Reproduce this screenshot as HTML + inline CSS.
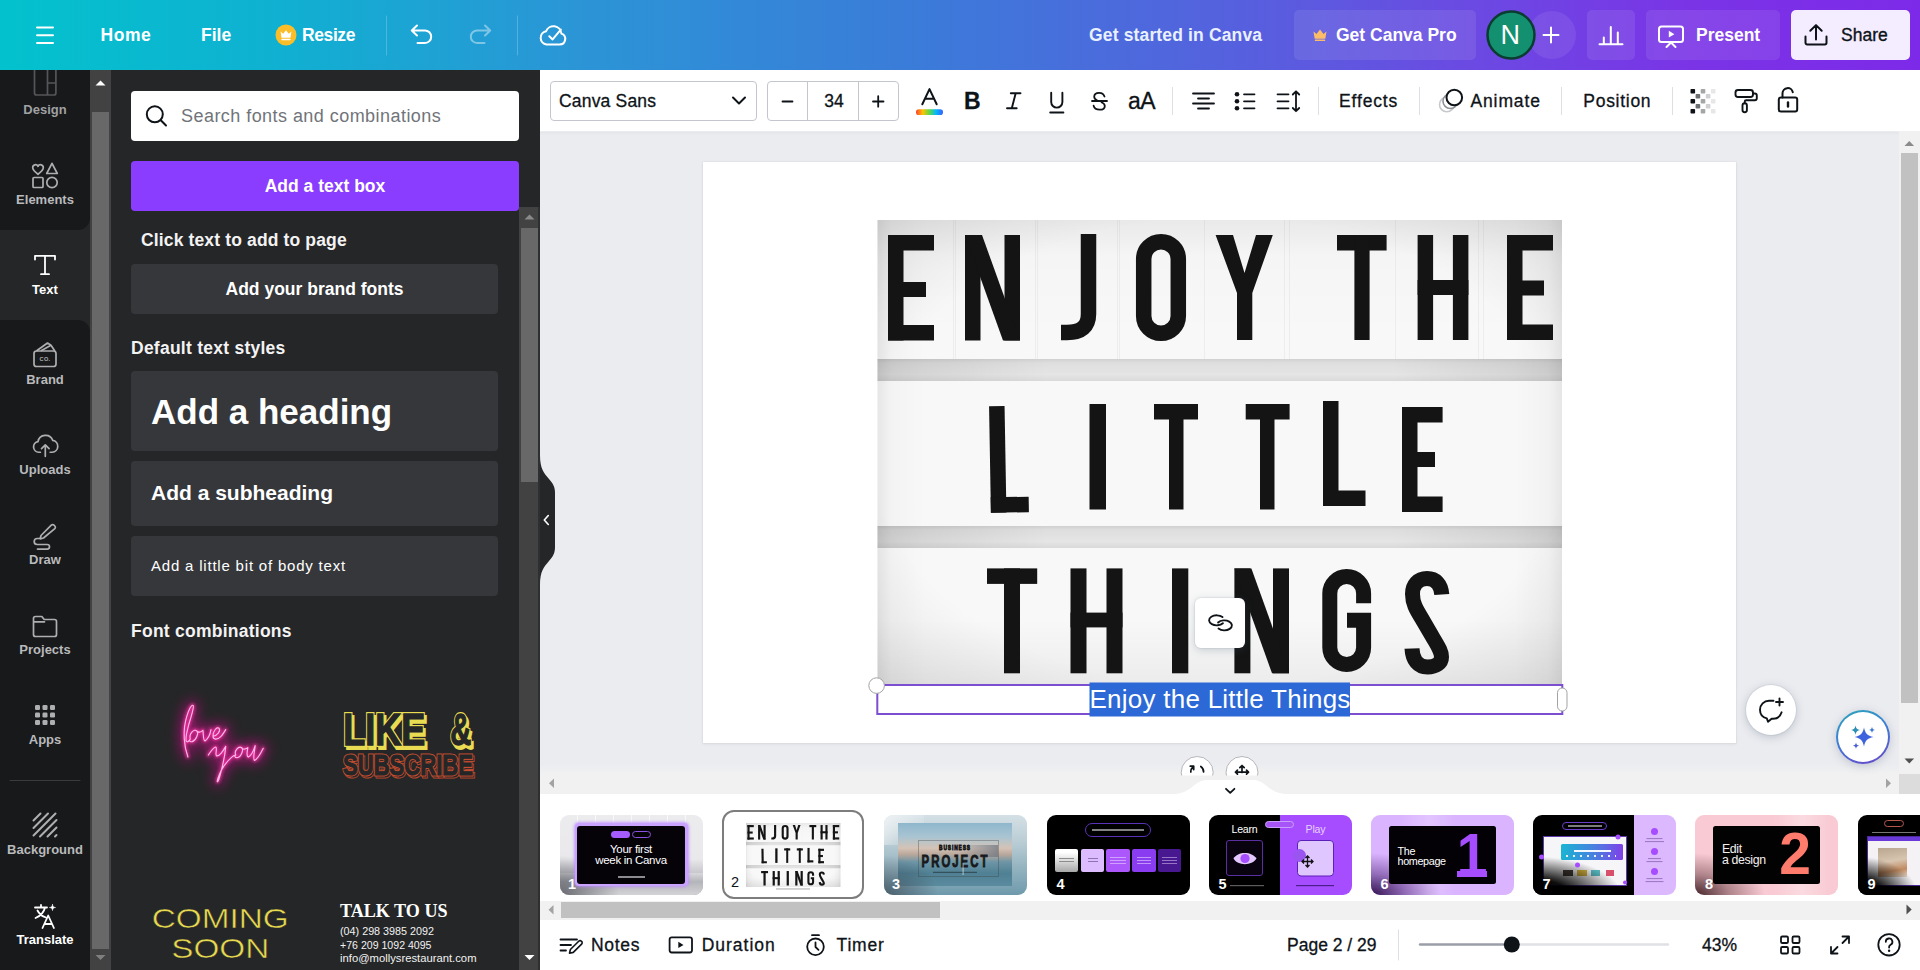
<!DOCTYPE html>
<html>
<head>
<meta charset="utf-8">
<title>Canva</title>
<style>
*{box-sizing:border-box;margin:0;padding:0}
html,body{width:1920px;height:970px;overflow:hidden;background:#ebecf0;font-family:"Liberation Sans",sans-serif;}
.abs{position:absolute}
#top{position:absolute;left:0;top:0;width:1920px;height:70px;background:linear-gradient(90deg,#03c2cd 0%,#0fb1d1 14%,#2b95d6 30%,#3b7bd9 48%,#5561de 64%,#6a4be2 76%,#7a34e6 88%,#7d2ae8 100%);color:#fff;}
#top .t{position:absolute;top:24px;font-weight:bold;font-size:17.5px;line-height:22px;white-space:nowrap;color:#fff}
#nav{position:absolute;left:0;top:70px;width:90px;height:900px;background:#18191b;overflow:hidden}
.ni{position:absolute;left:0;width:90px;text-align:center;color:#b9babc;font-weight:bold;font-size:13px;line-height:16px}
#nsb{position:absolute;left:90px;top:70px;width:21px;height:900px;background:#424242}
#panel{position:absolute;left:111px;top:70px;width:429px;height:900px;background:#252627;overflow:hidden}
#tb{position:absolute;left:540px;top:70px;width:1380px;height:62px;background:#fff;border-bottom:1.5px solid #e4e5e9}
#tb .t{position:absolute;top:20px;font-size:17.5px;line-height:22px;color:#0e1318;white-space:nowrap;-webkit-text-stroke:.3px #0e1318}
.vdiv{position:absolute;width:1px;height:28px;background:#dcdfe4}
#stage{position:absolute;left:540px;top:131px;width:1360px;height:642px;background:#ebecf0;overflow:hidden}
#page{position:absolute;left:703px;top:162px;width:1033px;height:581px;background:#fff;box-shadow:0 0 0 1px rgba(40,50,70,.025),0 1px 3px rgba(40,50,70,.09)}
#strip{position:absolute;left:540px;top:794px;width:1380px;height:107px;background:#fff;overflow:hidden}
#foot{position:absolute;left:540px;top:920px;width:1380px;height:50px;background:#fff}
#foot .t{position:absolute;top:13.5px;font-size:17.5px;line-height:22px;color:#0e1318;white-space:nowrap;-webkit-text-stroke:.3px #0e1318}
.th{position:absolute;top:20.500px;width:143px;height:80px;border-radius:9px;overflow:hidden}
.th .n{position:absolute;left:8px;bottom:3px;color:#fff;font-weight:bold;font-size:14.5px;line-height:16px}
</style>
</head>
<body>
<!-- TOPBAR -->
<div id="top">
<svg class="abs" style="left:0;top:0" width="1920" height="70" viewBox="0 0 1920 70" fill="none" stroke="#fff" stroke-width="2" stroke-linecap="round" stroke-linejoin="round">
<!-- hamburger -->
<path d="M37 27.5H53M37 35.2H53M37 43H53" stroke-width="2"/>
<!-- crown circle -->
<circle cx="286" cy="35" r="10.5" fill="#fbbe28" stroke="none"/>
<path d="M280.6 31.6l2.6 2.2 2.8-3.6 2.8 3.6 2.6-2.2-.9 6.2h-9z" fill="#fff" stroke="none"/>
<rect x="281.3" y="38.8" width="9.4" height="1.5" rx=".7" fill="#fff" stroke="none"/>
<!-- divider -->
<path d="M386.5 16V55" stroke="rgba(255,255,255,.22)" stroke-width="1"/>
<path d="M517.5 16V55" stroke="rgba(255,255,255,.22)" stroke-width="1"/>
<!-- undo -->
<path d="M417 25.5l-5.2 5 5.2 5M412.5 30.5h12.5a6.2 6.2 0 0 1 0 12.4h-7.5" stroke-width="2"/>
<!-- redo -->
<g opacity=".42"><path d="M485 25.5l5.2 5-5.2 5M489.500 30.5h-12.5a6.200 6.200 0 0 0 0 12.400h7.500" stroke-width="2"/></g>
<!-- cloud check -->
<path d="M546.5 44.500h13.200a5.600 5.600 0 0 0 1.700-10.900a8 8 0 0 0-15.400-2.300a6.700 6.700 0 0 0 .5 13.200z" stroke-width="2"/>
<path d="M549.300 36.300l3.300 3.100 8.200-9.800" stroke-width="2"/>
<!-- get canva pro bg -->
<rect x="1294" y="10" width="182" height="50" rx="5" fill="rgba(255,255,255,.09)" stroke="none"/>
<path d="M1313.500 31.500l3 2.600 3.500-4.600 3.500 4.600 3-2.600-1.200 7.300h-10.600z" fill="#fdbc68" stroke="none"/>
<rect x="1314.800" y="39.600" width="10.400" height="1.500" rx=".7" fill="#fdbc68" stroke="none"/>
<!-- plus bubble -->
<circle cx="1552" cy="35" r="24" fill="rgba(255,255,255,.08)" stroke="none"/>
<circle cx="1511" cy="35" r="23.500" fill="#13906f" stroke="#0b3c31" stroke-width="2.500"/>
<path d="M1543.500 35H1558.500M1551 27.500V42.500" stroke-width="2"/>
<!-- chart button -->
<rect x="1587" y="10" width="48" height="50" rx="5" fill="rgba(255,255,255,.09)" stroke="none"/>
<path d="M1599.500 44.300H1622.500M1603.800 44V37.500M1610.800 44V27M1617.800 44V32.500" stroke-width="2"/>
<!-- present button -->
<rect x="1646" y="10" width="134" height="50" rx="5" fill="rgba(255,255,255,.09)" stroke="none"/>
<rect x="1659" y="26.500" width="24" height="15.500" rx="2.500" stroke-width="2"/>
<path d="M1666.500 47l4.500-4.500 4.500 4.500" stroke-width="2"/>
<path d="M1668.800 30.800v6.800l5.600-3.400z" fill="#fff" stroke="none"/>
<!-- share button -->
<rect x="1791" y="10" width="119" height="50" rx="5" fill="#f4edff" stroke="none"/>
<path d="M1805.500 36.500v6.300a1.700 1.700 0 0 0 1.700 1.700h17.600a1.700 1.700 0 0 0 1.700-1.700v-6.300M1816 39.500V25.500M1810.300 30.800l5.700-5.700 5.700 5.700" stroke="#0e1318" stroke-width="2"/>
</svg>
<div class="t" style="left:100.500px;letter-spacing:.55px">Home</div>
<div class="t" style="left:201px">File</div>
<div class="t" style="left:302px;letter-spacing:-.4px">Resize</div>
<div class="t" style="left:1089px;color:#e9f0ff;letter-spacing:.15px">Get started in Canva</div>
<div class="t" style="left:1336px">Get Canva Pro</div>
<div class="t" style="left:1500.500px;top:21px;font-weight:normal;font-size:27px;line-height:28px">N</div>
<div class="t" style="left:1696px">Present</div>
<div class="t" style="left:1841px;color:#0e1318;font-weight:normal;-webkit-text-stroke:.35px #0e1318">Share</div>
</div>
<!-- NAV -->
<div id="nav">
<div class="abs" style="left:0;top:140px;width:90px;height:130px;background:#252627"></div>
<div class="abs" style="left:0;top:-60px;width:90px;height:220px;background:#18191b;border-radius:0 0 12px 0"></div>
<div class="abs" style="left:0;top:250px;width:90px;height:660px;background:#18191b;border-radius:0 12px 0 0"></div>
<svg class="abs" style="left:0;top:0" width="90" height="900" viewBox="0 70 90 900" fill="none" stroke="#aeafb1" stroke-width="1.700" stroke-linecap="round" stroke-linejoin="round">
<!-- design -->
<path d="M34.500 68v25a2 2 0 0 0 2 2h17.400a2 2 0 0 0 2-2V68M47.500 68v27M47.500 83h8.400" stroke="#55565a"/>
<!-- elements -->
<path d="M38 174.300c-2-1.500-5.300-4-5.300-6.700a2.800 2.800 0 0 1 5.300-1.300a2.800 2.800 0 0 1 5.300 1.300c0 2.700-3.300 5.200-5.300 6.700z"/>
<path d="M52 163.300l5.300 10.200h-10.600z"/>
<rect x="33" y="177.500" width="10" height="10" rx="1"/>
<circle cx="52" cy="182.500" r="5.200"/>
<!-- text -->
<path d="M35 259.500v-3.700h20v3.700M45 255.800v18.400M41 274.200h8" stroke="#fff" stroke-width="1.800"/>
<!-- brand -->
<rect x="34" y="351" width="22" height="15.500" rx="2.500"/>
<path d="M37 350.500l10.500-7.500 3.500 2.300M41.500 350.500l9.500-5.200 3.500 5.200"/>
<!-- uploads -->
<g transform="translate(45.300 445.500) scale(.9) translate(-45 -447.500)"><path d="M39.500 455h-1.800a6 6 0 0 1-.8-11.900a8.500 8.500 0 0 1 16.400-1.200a6.600 6.600 0 0 1-.6 13.100h-2.200M45 459.500v-12.500M40.800 451l4.200-4.200 4.200 4.200" stroke-width="1.900"/></g>
<!-- draw -->
<path d="M43.500 538l-3.300.8.800-3.300 10.300-10.300a1.900 1.900 0 0 1 2.700 0l.8.800a1.900 1.900 0 0 1 0 2.700zM39.500 538.500h-2.300a3 3 0 0 0 0 6h10a2.300 2.300 0 0 1 0 4.600h-9.700"/>
<!-- projects -->
<path d="M33.500 618.500a2 2 0 0 1 2-2h6.300l2.400 3h10.300a2 2 0 0 1 2 2v13a2 2 0 0 1-2 2h-19a2 2 0 0 1-2-2zM33.500 621.800h11"/>
<!-- apps -->
<g fill="#aeafb1" stroke="none">
<rect x="35" y="705" width="5" height="5" rx="1.200"/><rect x="42.500" y="705" width="5" height="5" rx="1.200"/><rect x="50" y="705" width="5" height="5" rx="1.200"/>
<rect x="35" y="712.500" width="5" height="5" rx="1.200"/><rect x="42.500" y="712.500" width="5" height="5" rx="1.200"/><rect x="50" y="712.500" width="5" height="5" rx="1.200"/>
<rect x="35" y="720" width="5" height="5" rx="1.200"/><rect x="42.500" y="720" width="5" height="5" rx="1.200"/><rect x="50" y="720" width="5" height="5" rx="1.200"/>
</g>
<!-- sep -->
<path d="M10 780.500H80" stroke="#3a3b3e" stroke-width="1"/>
<!-- background -->
<path d="M33.500 820.500l7-7M33.500 828l14.500-14.500M33.500 835.500l22-22M40 836.500l16.500-16.500M47.500 836.500l9-9M55 836.500l1.500-1.500" stroke-width="2"/>
<!-- translate -->
<g stroke="#fff" stroke-width="1.800">
<path d="M35 907.500h12M41 905v2.500M45 907.500c-1 4.500-4.500 8.500-9.500 10.500M37.500 910.500c1.500 3 4 5.500 8.500 7"/>
<path d="M42.500 928l5.700-12.500 5.700 12.500M44.500 924h7.500"/>
<path d="M52.500 904.500c.3 2 1 2.700 3 3c-2 .3-2.700 1-3 3c-.3-2-1-2.700-3-3c2-.3 2.700-1 3-3z" fill="#fff" stroke-width=".6"/>
</g>
</svg>
<svg class="abs" style="left:37px;top:284px" width="16" height="10" viewBox="0 0 16 10"><text x="8" y="7.300" text-anchor="middle" font-family="Liberation Sans" font-weight="bold" font-size="5.600" fill="#aeafb1" letter-spacing=".3">CO.</text></svg>
<div class="ni" style="top:32px;color:#a0a1a3">Design</div>
<div class="ni" style="top:122px">Elements</div>
<div class="ni" style="top:212px;color:#fff">Text</div>
<div class="ni" style="top:302px">Brand</div>
<div class="ni" style="top:392px">Uploads</div>
<div class="ni" style="top:482px">Draw</div>
<div class="ni" style="top:572px">Projects</div>
<div class="ni" style="top:662px">Apps</div>
<div class="ni" style="top:772px">Background</div>
<div class="ni" style="top:862px;color:#fff">Translate</div>
</div>
<div id="nsb">
<div class="abs" style="left:2px;top:42px;width:17px;height:837px;background:#686868"></div>
<svg class="abs" style="left:0;top:0" width="21" height="900" viewBox="0 0 21 900"><path d="M5.500 15.500l5-5 5 5z" fill="#fff"/><path d="M5.500 885l5 5 5-5z" fill="#7f7f7f"/></svg>
</div>
<!-- PANEL -->
<div id="panel">
<style>
#panel .b{position:absolute;left:20px;width:367px;background:#36373a;border-radius:4px}
#panel .h{position:absolute;left:20px;color:#f3f3f4;font-weight:bold;font-size:17.500px;line-height:22px;white-space:nowrap;letter-spacing:.25px}
</style>
<div class="abs" style="left:20px;top:21px;width:388px;height:50px;background:#fff;border-radius:4px"></div>
<svg class="abs" style="left:32px;top:32px" width="28" height="28" viewBox="0 0 28 28" fill="none" stroke="#0e1318" stroke-width="2" stroke-linecap="round"><circle cx="11.800" cy="12.300" r="8"/><path d="M17.800 18.300l5.200 5.200"/></svg>
<div class="abs" style="left:70px;top:35px;font-size:18px;line-height:22px;color:#70747a;white-space:nowrap;letter-spacing:.45px">Search fonts and combinations</div>
<div class="abs" style="left:20px;top:91px;width:388px;height:50px;background:#8b3dff;border-radius:4px;color:#fff;font-weight:bold;font-size:17.500px;line-height:50px;text-align:center">Add a text box</div>
<div class="h" style="left:30px;top:158.500px;letter-spacing:.14px">Click text to add to page</div>
<div class="b" style="top:194px;height:50px;color:#fff;font-weight:bold;font-size:17.500px;line-height:50px;text-align:center">Add your brand fonts</div>
<div class="h" style="top:267px">Default text styles</div>
<div class="b" style="top:301px;height:80px"></div>
<div class="abs" style="left:40px;top:321px;color:#fff;font-weight:bold;font-size:35px;line-height:42px;white-space:nowrap">Add a heading</div>
<div class="b" style="top:391px;height:65px"></div>
<div class="abs" style="left:40px;top:409px;color:#fff;font-weight:bold;font-size:21px;line-height:28px;white-space:nowrap">Add a subheading</div>
<div class="b" style="top:466px;height:60px"></div>
<div class="abs" style="left:40px;top:485.500px;color:#fff;font-size:15px;line-height:20px;white-space:nowrap;letter-spacing:.8px">Add a little bit of body text</div>
<div class="h" style="top:550px">Font combinations</div>

<svg class="abs" style="left:19px;top:600px" width="390" height="300" viewBox="130 670 390 300">
<defs><filter id="gl" x="-60%" y="-60%" width="220%" height="220%"><feGaussianBlur stdDeviation="48"/></filter><filter id="gl2" x="-30%" y="-30%" width="160%" height="160%"><feGaussianBlur stdDeviation="13"/></filter></defs>
<g transform="translate(150 680) scale(.13403)" fill="none" stroke-linecap="round" stroke-linejoin="round">
<g stroke="#e8109a" stroke-width="70" opacity=".55" filter="url(#gl)"><path d="M283,575 C255,500 240,380 275,270 C290,220 310,180 322,190 C332,200 310,260 290,330 C275,390 262,430 270,455 C280,470 290,455 300,440 C290,400 330,360 350,380 C365,395 345,450 315,460 C295,465 290,450 300,440 M350,385 C370,392 385,388 395,375 C400,410 395,450 410,455 C430,440 450,400 455,370 M470,420 C500,415 530,380 515,360 C500,345 470,380 470,420 C470,445 500,450 530,420 C545,405 555,385 565,370"/><path d="M435,560 C455,530 475,500 490,500 C505,505 485,550 495,565 C515,575 545,530 565,495 C560,560 540,650 520,720 C510,760 495,775 505,740 C520,690 560,620 610,575 C620,565 630,562 640,560 C625,530 660,490 685,505 C700,520 680,575 650,580 C630,580 630,565 640,560 M685,510 C700,520 715,515 730,505 C725,540 715,570 735,575 C755,565 775,520 785,490 C780,530 765,590 780,600 C800,595 830,540 845,510"/></g>
</g>
<g transform="translate(150 680) scale(.13403)" fill="none" stroke-linecap="round" stroke-linejoin="round">
<g stroke="#ff2fa8" stroke-width="24" opacity=".8" filter="url(#gl2)"><path d="M283,575 C255,500 240,380 275,270 C290,220 310,180 322,190 C332,200 310,260 290,330 C275,390 262,430 270,455 C280,470 290,455 300,440 C290,400 330,360 350,380 C365,395 345,450 315,460 C295,465 290,450 300,440 M350,385 C370,392 385,388 395,375 C400,410 395,450 410,455 C430,440 450,400 455,370 M470,420 C500,415 530,380 515,360 C500,345 470,380 470,420 C470,445 500,450 530,420 C545,405 555,385 565,370"/><path d="M435,560 C455,530 475,500 490,500 C505,505 485,550 495,565 C515,575 545,530 565,495 C560,560 540,650 520,720 C510,760 495,775 505,740 C520,690 560,620 610,575 C620,565 630,562 640,560 C625,530 660,490 685,505 C700,520 680,575 650,580 C630,580 630,565 640,560 M685,510 C700,520 715,515 730,505 C725,540 715,570 735,575 C755,565 775,520 785,490 C780,530 765,590 780,600 C800,595 830,540 845,510"/></g>
<g stroke="#ffb9e8" stroke-width="8.500"><path d="M283,575 C255,500 240,380 275,270 C290,220 310,180 322,190 C332,200 310,260 290,330 C275,390 262,430 270,455 C280,470 290,455 300,440 C290,400 330,360 350,380 C365,395 345,450 315,460 C295,465 290,450 300,440 M350,385 C370,392 385,388 395,375 C400,410 395,450 410,455 C430,440 450,400 455,370 M470,420 C500,415 530,380 515,360 C500,345 470,380 470,420 C470,445 500,450 530,420 C545,405 555,385 565,370"/><path d="M435,560 C455,530 475,500 490,500 C505,505 485,550 495,565 C515,575 545,530 565,495 C560,560 540,650 520,720 C510,760 495,775 505,740 C520,690 560,620 610,575 C620,565 630,562 640,560 C625,530 660,490 685,505 C700,520 680,575 650,580 C630,580 630,565 640,560 M685,510 C700,520 715,515 730,505 C725,540 715,570 735,575 C755,565 775,520 785,490 C780,530 765,590 780,600 C800,595 830,540 845,510"/></g>
</g>
<g font-family="Liberation Sans" font-weight="bold">
<g textLength="84">
<text x="345.300" y="747.800" font-size="44" textLength="82" lengthAdjust="spacingAndGlyphs" fill="#e9dc52" stroke="#e9dc52" stroke-width="3.800" stroke-linejoin="miter">LIKE</text>
<text x="452.300" y="747.800" font-size="44" textLength="21" lengthAdjust="spacingAndGlyphs" fill="#e9dc52" stroke="#e9dc52" stroke-width="3.800">&amp;</text>
<text x="343.300" y="744.800" font-size="44" textLength="82" lengthAdjust="spacingAndGlyphs" fill="#e9dc52" stroke="#e9dc52" stroke-width="3.800" stroke-linejoin="miter">LIKE</text>
<text x="450.300" y="744.800" font-size="44" textLength="21" lengthAdjust="spacingAndGlyphs" fill="#e9dc52" stroke="#e9dc52" stroke-width="3.800">&amp;</text>
<text x="343.300" y="744.800" font-size="44" textLength="82" lengthAdjust="spacingAndGlyphs" fill="#252627" stroke="#252627" stroke-width="1.300" stroke-linejoin="miter">LIKE</text>
<text x="450.300" y="744.800" font-size="44" textLength="21" lengthAdjust="spacingAndGlyphs" fill="#252627" stroke="#252627" stroke-width="1.300">&amp;</text>
<text x="344.500" y="776.800" font-size="29" textLength="130" lengthAdjust="spacingAndGlyphs" fill="#b8472d" stroke="#b8472d" stroke-width="3.200">SUBSCRIBE</text>
<text x="344.500" y="776.800" font-size="29" textLength="130" lengthAdjust="spacingAndGlyphs" fill="#252627" stroke="#252627" stroke-width="1.100">SUBSCRIBE</text>
<text x="343" y="775.300" font-size="29" textLength="130" lengthAdjust="spacingAndGlyphs" fill="#c44e30" stroke="#c44e30" stroke-width="3.200">SUBSCRIBE</text>
<text x="343" y="775.300" font-size="29" textLength="130" lengthAdjust="spacingAndGlyphs" fill="#252627" stroke="#252627" stroke-width="1.100">SUBSCRIBE</text>
</g>
</g>
<g font-family="Liberation Sans" fill="#e8da50" font-size="28.500" stroke="#252627" stroke-width=".5">
<text x="220.300" y="928.300" text-anchor="middle" textLength="137" lengthAdjust="spacingAndGlyphs">COMING</text>
<text x="220.300" y="957.500" text-anchor="middle" textLength="98" lengthAdjust="spacingAndGlyphs">SOON</text>
</g>
<text x="340" y="917.400" font-family="Liberation Serif" font-weight="bold" font-size="18.500" fill="#fff" textLength="107.500" lengthAdjust="spacingAndGlyphs">TALK TO US</text>
<g font-family="Liberation Sans" fill="#f2f2f2" font-size="10.300">
<text x="340" y="935.300" textLength="94" lengthAdjust="spacingAndGlyphs">(04) 298 3985 2092</text>
<text x="340" y="948.600" textLength="91.500" lengthAdjust="spacingAndGlyphs">+76 209 1092 4095</text>
<text x="340" y="962.300" textLength="136.500" lengthAdjust="spacingAndGlyphs">info@mollysrestaurant.com</text>
</g>
</svg>
<!-- inner scrollbar -->
<div class="abs" style="left:408px;top:137px;width:21px;height:763px;background:#424242"></div>
<div class="abs" style="left:409.500px;top:158px;width:17px;height:254px;background:#686868"></div><div class="abs" style="left:427px;top:137px;width:2px;height:763px;background:#2e2f30"></div>
<svg class="abs" style="left:408px;top:137px" width="21" height="763" viewBox="0 0 21 763"><path d="M5.500 12.500l5-5 5 5z" fill="#8a8a8a"/><path d="M5.500 748l5 5 5-5z" fill="#fff"/></svg>
</div>
<!-- TOOLBAR -->
<div id="tb">
<div class="abs" style="left:10px;top:11px;width:207px;height:40px;border:1px solid #c3c6cc;border-radius:4px"></div>
<div class="abs" style="left:227px;top:11px;width:132px;height:40px;border:1px solid #c3c6cc;border-radius:4px"></div>
<div class="abs" style="left:267px;top:12px;width:1px;height:38px;background:#c3c6cc"></div>
<div class="abs" style="left:318px;top:12px;width:1px;height:38px;background:#c3c6cc"></div>
<div class="t" style="left:19px;letter-spacing:.18px">Canva Sans</div>
<div class="t" style="left:282px;width:24px;text-align:center">34</div>
<div class="t" style="left:799px;letter-spacing:.85px">Effects</div>
<div class="t" style="left:930.400px;letter-spacing:.9px">Animate</div>
<div class="t" style="left:1043.300px;letter-spacing:.72px">Position</div>
<div class="t" style="left:424px;top:19px;font-weight:bold;font-size:23px;line-height:24px">B</div>

<div class="t" style="left:588px;top:19px;font-size:23px;line-height:24px;letter-spacing:-.5px">aA</div>
<svg class="abs" style="left:0;top:0" width="1380" height="61" viewBox="540 70 1380 61" fill="none" stroke="#0e1318" stroke-width="2" stroke-linecap="round" stroke-linejoin="round">
<path d="M733 97.500l6 6 6-6"/>
<path d="M782.500 101.500h10M873 101.500h10.500M878.200 96.200v10.500" stroke-width="1.800"/>
<!-- A color -->
<path d="M922.300 104.300l7.200-15.200 7.200 15.200M925.200 98.800h8.600" stroke-width="2"/>
<defs><linearGradient id="rb" x1="0" x2="1"><stop offset="0" stop-color="#ff3d2e"/><stop offset=".25" stop-color="#ffc400"/><stop offset=".5" stop-color="#5cd94a"/><stop offset=".75" stop-color="#00b7ff"/><stop offset="1" stop-color="#3f5bff"/></linearGradient></defs>
<rect x="916" y="109.300" width="27" height="5.700" rx="2.850" fill="url(#rb)" stroke="none"/>
<path d="M1010.800 93.300h9.700M1007 108.300h9.700M1015.700 93.300l-3.900 15" stroke-width="1.900"/>
<!-- U -->
<path d="M1051.200 92.800v9.200a5.600 5.600 0 0 0 11.200 0v-9.200M1050.200 112.500h13.200" stroke-width="1.900"/>
<!-- S strike -->
<path d="M1104.500 96.500c-.8-2.400-2.700-3.700-5.300-3.700c-3 0-5 1.600-5 4c0 1.500 1 2.700 2.800 3.500M1101.500 102.200c1.800.8 3.300 1.900 3.300 3.700c0 2.300-2.200 3.800-5.200 3.800c-3 0-5.300-1.400-6-4M1092 101h15" stroke-width="1.800"/>
<!-- align -->
<path d="M1193 93.500h21M1198 98.500h11M1193 103.500h21M1198 108.500h11" stroke-width="1.800"/>
<!-- list -->
<g fill="#0e1318" stroke="none"><circle cx="1237" cy="94.300" r="2.300"/><circle cx="1237" cy="101.300" r="2.300"/><circle cx="1237" cy="108.300" r="2.300"/></g>
<path d="M1244 94.300h10.500M1244 101.300h10.500M1244 108.300h10.500" stroke-width="1.800"/>
<!-- spacing -->
<path d="M1277.500 94.300h11M1277.500 101.300h11M1277.500 108.300h11M1296 91.500v19.500M1292.800 94.500l3.200-3.200 3.200 3.200M1292.800 108l3.200 3.200 3.200-3.200" stroke-width="1.800"/>
<!-- animate -->
<circle cx="1446.800" cy="104.500" r="7.300" stroke="#c6c8cc" stroke-width="1.600"/>
<circle cx="1450.300" cy="101.200" r="7.300" fill="#fff" stroke="#8d9096" stroke-width="1.600"/>
<circle cx="1454.300" cy="97.500" r="7.800" fill="#fff" stroke-width="2"/>
<!-- checker -->
<g stroke="none"><rect x="1690.5" y="89.0" width="4.600" height="4.600" rx=".8" fill="#0e1318" opacity="1.00"/><rect x="1700.7" y="89.0" width="4.600" height="4.600" rx=".8" fill="#0e1318" opacity="0.38"/><rect x="1710.9" y="89.0" width="4.600" height="4.600" rx=".8" fill="#0e1318" opacity="0.10"/><rect x="1695.6" y="94.0" width="4.600" height="4.600" rx=".8" fill="#0e1318" opacity="0.62"/><rect x="1705.8" y="94.0" width="4.600" height="4.600" rx=".8" fill="#0e1318" opacity="0.20"/><rect x="1690.5" y="99.0" width="4.600" height="4.600" rx=".8" fill="#0e1318" opacity="1.00"/><rect x="1700.7" y="99.0" width="4.600" height="4.600" rx=".8" fill="#0e1318" opacity="0.38"/><rect x="1710.9" y="99.0" width="4.600" height="4.600" rx=".8" fill="#0e1318" opacity="0.10"/><rect x="1695.6" y="104.0" width="4.600" height="4.600" rx=".8" fill="#0e1318" opacity="0.62"/><rect x="1705.8" y="104.0" width="4.600" height="4.600" rx=".8" fill="#0e1318" opacity="0.20"/><rect x="1690.5" y="109.0" width="4.600" height="4.600" rx=".8" fill="#0e1318" opacity="1.00"/><rect x="1700.7" y="109.0" width="4.600" height="4.600" rx=".8" fill="#0e1318" opacity="0.38"/><rect x="1710.9" y="109.0" width="4.600" height="4.600" rx=".8" fill="#0e1318" opacity="0.10"/></g>
<!-- roller -->
<rect x="1735.500" y="90" width="17.500" height="7" rx="2.500" stroke-width="1.900"/>
<path d="M1753 93.500h1.800a2 2 0 0 1 2 2v2.800a2 2 0 0 1-2 2h-8.600a1.500 1.500 0 0 0-1.500 1.500v1.500" stroke-width="1.900"/>
<rect x="1742.500" y="103.300" width="4.400" height="9" rx="2.200" stroke-width="1.900"/>
<!-- lock -->
<rect x="1778.800" y="97.500" width="18.400" height="14" rx="2" stroke-width="2"/>
<path d="M1782.500 97.500v-4.200a5.200 5.200 0 0 1 10.300-1" stroke-width="2"/>
<path d="M1788 102.500v4" stroke-width="2.400"/>
</svg>
<div class="vdiv" style="left:632px;top:17px"></div>
<div class="vdiv" style="left:778px;top:17px"></div>
<div class="vdiv" style="left:879px;top:17px"></div>
<div class="vdiv" style="left:1021px;top:17px"></div>
<div class="vdiv" style="left:1132px;top:17px"></div>
</div>
<!-- STAGE -->
<div id="stage"></div>
<div id="page"></div>
<svg class="abs" style="left:0;top:0" width="1920" height="780" viewBox="0 0 1920 780">
<defs>
<linearGradient id="vg" x1="0" x2="1"><stop offset="0" stop-color="#000" stop-opacity=".07"/><stop offset=".02" stop-color="#000" stop-opacity=".02"/><stop offset=".07" stop-color="#000" stop-opacity="0"/><stop offset=".93" stop-color="#000" stop-opacity="0"/><stop offset=".98" stop-color="#000" stop-opacity=".025"/><stop offset="1" stop-color="#000" stop-opacity=".07"/></linearGradient>
<linearGradient id="vg2" x1="0" y1="0" x2="0" y2="1"><stop offset="0" stop-color="#000" stop-opacity=".06"/><stop offset=".08" stop-color="#000" stop-opacity=".012"/><stop offset=".25" stop-color="#000" stop-opacity="0"/><stop offset=".86" stop-color="#000" stop-opacity="0"/><stop offset="1" stop-color="#000" stop-opacity=".05"/></linearGradient>
<radialGradient id="vg3" cx=".5" cy=".5" r=".72"><stop offset="0" stop-color="#000" stop-opacity="0"/><stop offset=".7" stop-color="#000" stop-opacity="0"/><stop offset="1" stop-color="#000" stop-opacity=".085"/></radialGradient>
<linearGradient id="bdh" x1="0" x2="1"><stop offset="0" stop-color="#000" stop-opacity=".09"/><stop offset=".25" stop-color="#000" stop-opacity="0"/><stop offset=".75" stop-color="#000" stop-opacity="0"/><stop offset="1" stop-color="#000" stop-opacity=".09"/></linearGradient>
<linearGradient id="bd" x1="0" y1="0" x2="0" y2="1"><stop offset="0" stop-color="#d0d0d0"/><stop offset=".18" stop-color="#dedede"/><stop offset=".7" stop-color="#e5e5e5"/><stop offset="1" stop-color="#dadada"/></linearGradient>
</defs>
<g id="board"><rect x="877.500" y="220" width="684.500" height="464" fill="#f8f8f8"/>
<rect x="953" y="220" width="1" height="140" fill="rgba(0,0,0,.045)"/><rect x="955" y="220" width="1" height="140" fill="rgba(0,0,0,.045)"/><rect x="1035" y="220" width="1" height="140" fill="rgba(0,0,0,.045)"/><rect x="1037" y="220" width="1" height="140" fill="rgba(0,0,0,.045)"/><rect x="1117" y="220" width="1" height="140" fill="rgba(0,0,0,.045)"/><rect x="1119" y="220" width="1" height="140" fill="rgba(0,0,0,.045)"/><rect x="1204" y="220" width="1" height="140" fill="rgba(0,0,0,.045)"/><rect x="1284" y="220" width="1" height="140" fill="rgba(0,0,0,.045)"/><rect x="1289" y="220" width="1" height="140" fill="rgba(0,0,0,.045)"/><rect x="1395" y="220" width="1" height="140" fill="rgba(0,0,0,.045)"/><rect x="1478" y="220" width="1" height="140" fill="rgba(0,0,0,.045)"/><rect x="1483" y="220" width="1" height="140" fill="rgba(0,0,0,.045)"/>
<rect x="877.500" y="359" width="684.500" height="22" fill="url(#bd)"/>
<rect x="877.500" y="526" width="684.500" height="22" fill="url(#bd)"/>
<rect x="877.500" y="359" width="684.500" height="22" fill="url(#bdh)"/><rect x="877.500" y="526" width="684.500" height="22" fill="url(#bdh)"/><rect x="877.500" y="220" width="684.500" height="464" fill="url(#vg3)"/><rect x="877.500" y="220" width="684.500" height="464" fill="url(#vg)"/>
<rect x="877.500" y="220" width="684.500" height="464" fill="url(#vg2)"/>
<g fill="#141414"><rect x="888.0" y="235.0" width="15.5" height="105.5"/><rect x="888.0" y="235.0" width="46.0" height="15.5"/><rect x="888.0" y="325.0" width="46.0" height="15.5"/><rect x="888.0" y="282.0" width="38.0" height="15.0"/><rect x="965.0" y="235.0" width="15.5" height="105.5"/><rect x="1004.5" y="235.0" width="15.5" height="105.5"/><polygon points="965.0,235.0 982.0,235.0 1020.0,340.5 1003.0,340.5"/><path d="M1088.500 234V314Q1088.500 332.500 1067 332.500H1061" fill="none" stroke="#141414" stroke-width="15.500"/><rect x="1143.700" y="241.700" width="34.600" height="91.600" rx="17.300" fill="none" stroke="#141414" stroke-width="15.500"/><polygon points="1215.600,235 1233,235 1244.500,273 1256,235 1272.800,235 1252.300,293 1252.300,340 1237,340 1237,293"/><rect x="1337.0" y="235.0" width="49.6" height="15.5"/><rect x="1354.4" y="235.0" width="15.2" height="105.0"/><rect x="1417.6" y="235.0" width="15.5" height="105.0"/><rect x="1452.9" y="235.0" width="15.5" height="105.0"/><rect x="1417.6" y="280.0" width="50.8" height="15.0"/><rect x="1507.0" y="235.0" width="15.5" height="105.0"/><rect x="1507.0" y="235.0" width="46.0" height="15.5"/><rect x="1507.0" y="324.5" width="46.0" height="15.5"/><rect x="1507.0" y="280.5" width="37.0" height="15.0"/><g transform="rotate(-1 1009 460)"><rect x="990.0" y="406.0" width="15.5" height="106.5"/><rect x="990.0" y="497.0" width="38.0" height="15.5"/></g><rect x="1089.5" y="404.0" width="16.5" height="105.5"/><rect x="1154.0" y="404.0" width="44.0" height="15.5"/><rect x="1169.0" y="404.0" width="14.5" height="105.5"/><rect x="1245.7" y="404.0" width="43.9" height="15.5"/><rect x="1260.0" y="404.0" width="14.5" height="105.5"/><rect x="1323.0" y="401.0" width="15.5" height="105.0"/><rect x="1323.0" y="490.5" width="42.5" height="15.5"/><rect x="1402.0" y="407.0" width="15.5" height="105.0"/><rect x="1402.0" y="407.0" width="40.6" height="15.5"/><rect x="1402.0" y="496.5" width="40.6" height="15.5"/><rect x="1402.0" y="452.0" width="33.0" height="15.0"/><rect x="987.0" y="568.4" width="50.2" height="15.5"/><rect x="1004.0" y="568.4" width="16.0" height="104.9"/><rect x="1070.5" y="568.4" width="16.0" height="104.9"/><rect x="1106.5" y="568.4" width="16.0" height="104.9"/><rect x="1070.5" y="612.6" width="52.0" height="14.8"/><rect x="1172" y="568.4" width="16.300" height="104.900"/><rect x="1234.4" y="568.4" width="16.0" height="104.9"/><rect x="1273.0" y="568.4" width="16.0" height="104.9"/><polygon points="1234.4,568.4 1251.4,568.4 1289.0,673.3 1272.0,673.3"/><path d="M1363.600 603.300V593.500a16.900 16.900 0 0 0-33.800 0V647.500a16.900 16.900 0 0 0 33.800 0V620.200H1347" fill="none" stroke="#141414" stroke-width="15" stroke-linejoin="miter"/><path d="M1441.800 594.500C1441 584 1435.500 578.500 1427 578.500C1418 578.500 1412.500 585 1412.500 594C1412.500 603 1416 609 1421.500 618L1432 636C1437.500 645.500 1441.500 651 1441.500 657C1441.500 663 1436 667 1427.500 667C1418 667 1412.500 660 1412 648.500" fill="none" stroke="#141414" stroke-width="15"/></g>
</g>
<!-- selection -->
<rect x="877.300" y="685" width="685" height="29" fill="none" stroke="#7b4fd0" stroke-width="2"/>
<rect x="1089.500" y="682.500" width="260.500" height="34" fill="#2c68d6"/>
<circle cx="876.600" cy="685.600" r="7.800" fill="#fff" stroke="#a3a3a3" stroke-width="1"/>
<rect x="1557.500" y="688" width="9.500" height="23" rx="4.700" fill="#fff" stroke="#a3a3a3" stroke-width="1"/>
</svg>
<div class="abs" style="left:1089.500px;top:684px;width:260.500px;text-align:center;color:#fff;font-size:26px;line-height:30px;white-space:nowrap;letter-spacing:.25px">Enjoy the Little Things</div>
<!-- link popup -->
<div class="abs" style="left:1194.500px;top:597.500px;width:50px;height:50px;background:#fff;border-radius:6px;box-shadow:0 0 0 1px rgba(64,87,109,.07),0 2px 8px rgba(64,87,109,.25)"></div>
<svg class="abs" style="left:1194.500px;top:597.500px" width="50" height="50" viewBox="0 0 50 50" fill="none" stroke="#0e1318" stroke-width="1.900" stroke-linecap="round"><path d="M27.500 19.100A7.600 5 0 1 0 27.900 25.200"/><path d="M23.500 30.600A7.600 5 0 1 0 23.100 24.500"/></svg>

<!-- stage chrome -->
<div class="abs" style="left:540px;top:132px;width:1360px;height:3px;background:linear-gradient(#e4e5e9,#ebecf0)"></div><div class="abs" style="left:540px;top:764px;width:1360px;height:10px;background:linear-gradient(#ebecf0,#f1f1f1)"></div>
<!-- v scrollbar -->
<div class="abs" style="left:1899px;top:131px;width:21px;height:643px;background:#f1f1f1"></div>
<div class="abs" style="left:1901px;top:153px;width:17px;height:550px;background:#c1c1c1"></div>
<svg class="abs" style="left:1899px;top:131px" width="21" height="643" viewBox="0 0 21 643"><path d="M5.500 15l4.800-5 4.800 5z" fill="#8a8a8a"/><path d="M5.500 627.500l4.800 5 4.800-5z" fill="#505050"/></svg>
<!-- h scrollbar -->
<div class="abs" style="left:540px;top:774px;width:1359px;height:20px;background:#f1f1f1"></div>
<div class="abs" style="left:1899px;top:774px;width:21px;height:20px;background:#dcdcdc"></div>
<svg class="abs" style="left:540px;top:755px" width="1360" height="40" viewBox="540 755 1360 40">
<path d="M554 778.500l-5 4.800 5 4.800z" fill="#a3a3a3"/><path d="M1886 778.500l5 4.800-5 4.800z" fill="#a3a3a3"/>
<defs><clipPath id="cpb"><rect x="540" y="755" width="1360" height="20.500"/></clipPath></defs>
<g clip-path="url(#cpb)" fill="#fff" stroke="#b4b6bb" stroke-width="1">
<circle cx="1197.200" cy="772.500" r="16"/><circle cx="1242" cy="772.500" r="16"/>
<g fill="none" stroke="#0e1318" stroke-width="1.700" stroke-linecap="round" stroke-linejoin="round">
<path d="M1190.800 772a6.500 6.500 0 0 1 2.600-5.300M1190.300 766.200h3.400v3.400M1200.800 766.500a6.500 6.500 0 0 1 2.800 5.500"/>
<path d="M1242 765.500v7M1239.800 767.700l2.200-2.200 2.200 2.200M1235.500 772.200h13M1237.500 770.200l-2 2 2 2M1246.500 770.200l2 2-2 2"/>
</g></g>
<path d="M1168 794.500c14 0 20-4 26-9c5-4 8-5.500 14-5.500h44c6 0 9 1.500 14 5.500c6 5 12 9 26 9z" fill="#fff"/>
<path d="M1226 788.800l4.200 4 4.200-4" fill="none" stroke="#0e1318" stroke-width="1.800" stroke-linecap="round" stroke-linejoin="round"/>
</svg>
<!-- floating buttons -->
<div class="abs" style="left:1746px;top:685px;width:50px;height:50px;border-radius:50%;background:#fff;box-shadow:0 0 0 1px rgba(64,87,109,.07),0 2px 10px rgba(64,87,109,.28)"></div>
<svg class="abs" style="left:1746px;top:685px" width="50" height="50" viewBox="0 0 50 50" fill="none" stroke="#0e1318" stroke-width="1.900" stroke-linecap="round" stroke-linejoin="round"><path d="M27.500 15.800h-4.500a9 9 0 0 0-9 9c0 4.200 2.800 7.600 6.800 8.600l1.200 3.400 3.600-3h1.400a9 9 0 0 0 8.600-6.500"/><path d="M30 17h7M33.500 13.500v7"/></svg>
<div class="abs" style="left:1836px;top:710px;width:54px;height:54px;border-radius:50%;background:linear-gradient(160deg,#2aa6b8 0%,#3d7ed6 45%,#6a44c8 100%);box-shadow:0 2px 10px rgba(64,87,109,.25)"></div>
<div class="abs" style="left:1838px;top:712px;width:50px;height:50px;border-radius:50%;background:#fff"></div>
<svg class="abs" style="left:1836px;top:710px" width="54" height="54" viewBox="0 0 54 54"><defs><linearGradient id="mg" x1="0" y1="0" x2="1" y2="1"><stop offset="0" stop-color="#2b9fc0"/><stop offset=".5" stop-color="#3f63dd"/><stop offset="1" stop-color="#5a4fd0"/></linearGradient></defs>
<path d="M28 17.500c1.200 6 3.200 8.300 9.500 9.500c-6.300 1.200-8.300 3.500-9.500 9.500c-1.200-6-3.200-8.300-9.500-9.500c6.300-1.200 8.300-3.500 9.500-9.500z" fill="#3f63dd"/>
<path d="M19.500 15.500c.6 3 1.600 4 4.500 4.600c-2.900.6-3.900 1.600-4.500 4.600c-.6-3-1.600-4-4.500-4.600c2.900-.6 3.900-1.600 4.500-4.600z" fill="#2b8fb5"/>
<path d="M36 16.800c.4 2 1 2.700 3 3.100c-2 .4-2.600 1.100-3 3.100c-.4-2-1-2.700-3-3.100c2-.4 2.600-1.100 3-3.100z" fill="#3f7ad0"/>
<path d="M20 32.500c.4 2.100 1.100 2.800 3.200 3.200c-2.100.4-2.800 1.100-3.200 3.200c-.4-2.100-1.100-2.800-3.200-3.200c2.100-.4 2.800-1.100 3.200-3.200z" fill="#4a5fd5"/>
</svg>
<!-- collapse handle -->
<svg class="abs" style="left:540px;top:455px" width="16" height="130" viewBox="0 0 16 130"><path d="M0 0c0 14 4 18 9 24c4 4.500 6 8 6 14v54c0 6-2 9.500-6 14c-5 6-9 10-9 24z" fill="#252627"/><path d="M8.300 60.500l-4 4.500 4 4.500" fill="none" stroke="#fff" stroke-width="1.600" stroke-linecap="round" stroke-linejoin="round"/></svg>
<!-- STRIP -->
<div id="strip">
<!-- 1 -->
<div class="th" style="left:20px;background:linear-gradient(180deg,#ececee 0%,#e9e9ec 55%,#c9c9cd 72%,#8f9096 100%)">
<div class="abs" style="left:0;top:0;width:143px;height:60px;background:repeating-linear-gradient(90deg,rgba(255,255,255,0) 0,rgba(255,255,255,0) 17px,rgba(255,255,255,.7) 17px,rgba(255,255,255,.7) 18px)"></div>
<div class="abs" style="left:0;top:58px;width:143px;height:22px;background:linear-gradient(180deg,#d9d9dc,#b4b5ba 40%,#d4d4d7)"></div>
<div class="abs" style="left:0;top:40px;width:60px;height:40px;background:radial-gradient(ellipse at 0% 100%,rgba(70,72,80,.75),rgba(70,72,80,0) 70%)"></div>
<div class="abs" style="left:14.500px;top:8.500px;width:113px;height:63px;border-radius:4px;background:#c9a3ff;box-shadow:0 0 3px 1px rgba(190,140,255,.8)"></div>
<div class="abs" style="left:17px;top:11px;width:108px;height:58px;border-radius:3px;background:#050208"></div>
<div class="abs" style="left:51px;top:16.500px;width:18.500px;height:6.500px;border-radius:3.500px;background:#a45cff"></div>
<div class="abs" style="left:72px;top:16.500px;width:18.500px;height:6.500px;border-radius:3.500px;border:1px solid #8a52e0"></div>
<div class="abs" style="left:17px;top:29.500px;width:108px;text-align:center;color:#fff;font-size:11.500px;line-height:10.500px;letter-spacing:-.3px">Your first<br>week in Canva</div>
<div class="abs" style="left:58px;top:61.500px;width:27px;height:1.500px;background:#8c8c90"></div>
<div class="n">1</div></div>
<!-- 2 -->
<div class="abs" style="left:182px;top:16px;width:142px;height:89px;border:2px solid #7d7d7d;border-radius:12px;background:#fff"></div>
<svg class="abs" style="left:182px;top:16px" width="142" height="89" viewBox="722 810 142 89"><use href="#board" transform="translate(624.900 792.600) scale(.138)"/><rect x="776" y="888.300" width="34" height="1.300" fill="#bdbdbd"/></svg>
<div class="abs" style="left:191px;top:80px;color:#0e1318;font-size:14.500px;line-height:16px">2</div>
<!-- 3 -->
<div class="th" style="left:344px;background:linear-gradient(180deg,#d4e0e5 0%,#b9ccd4 35%,#8fb0bd 70%,#6f9aac 100%)">
<div class="abs" style="left:0;top:0;width:40px;height:30px;background:linear-gradient(135deg,#eef2f4,rgba(238,242,244,0) 80%)"></div>
<div class="abs" style="left:14px;top:8.500px;width:113.500px;height:63px;background:linear-gradient(180deg,#8fb7cd 0%,#a9c4d2 22%,#d5c3b6 40%,#b8a79b 50%,#6d95a6 62%,#4f8093 80%,#5b8b9e 100%)"></div>
<div class="abs" style="left:75px;top:30px;width:39px;height:12px;background:linear-gradient(90deg,rgba(120,128,140,0),rgba(110,118,130,.75))"></div>
<div class="abs" style="left:0;top:40px;width:55px;height:40px;background:radial-gradient(ellipse at 0% 100%,rgba(60,70,80,.7),rgba(60,70,80,0) 70%)"></div>
<div class="abs" style="left:33.500px;top:25px;width:81px;height:37px;border:1px solid rgba(60,60,60,.35)"></div>
<svg class="abs" style="left:0;top:0" width="143" height="80" viewBox="0 0 143 80"><g fill="#17191c" stroke="#17191c" stroke-width=".9" font-family="Liberation Sans" font-weight="bold"><text x="71" y="35.300" font-size="8" text-anchor="middle" textLength="32" lengthAdjust="spacingAndGlyphs" transform="translate(71 0) scale(1 1) translate(-71 0)" letter-spacing="1.500">BUSINESS</text><text x="71.500" y="52.300" font-size="17" text-anchor="middle" transform="translate(71.500 0) scale(.67 1) translate(-71.500 0)" letter-spacing="3">PROJECT</text></g><rect x="49" y="56.800" width="44" height="1" fill="#1d2b33" opacity=".7"/><rect x="78.500" y="48" width="1.200" height="12" fill="#e8ecee" opacity=".55"/></svg>
<div class="n">3</div></div>
<!-- 4 -->
<div class="th" style="left:506.500px;background:#000">
<div class="abs" style="left:38px;top:8.500px;width:66px;height:14px;border-radius:7px;border:1.500px solid #5a32b8"></div>
<div class="abs" style="left:45px;top:14.500px;width:52px;height:2.200px;background:#d8d8d8;opacity:.6"></div>
<div class="abs" style="left:8px;top:34.500px;width:23px;height:22.500px;border-radius:2px;background:linear-gradient(180deg,#fff 15%,#a8a8a8)"></div>
<div class="abs" style="left:34px;top:34.500px;width:23.500px;height:22.500px;border-radius:2px;background:#dcbcff"></div>
<div class="abs" style="left:59.500px;top:34.500px;width:23.500px;height:22.500px;border-radius:2px;background:#ab57fb"></div>
<div class="abs" style="left:85.500px;top:34.500px;width:23.500px;height:22.500px;border-radius:2px;background:#8a3cf0"></div>
<div class="abs" style="left:111px;top:34.500px;width:23.500px;height:22.500px;border-radius:2px;background:#47188f"></div>
<div class="abs" style="left:12px;top:43.500px;width:15px;height:4.500px;background:repeating-linear-gradient(180deg,#8d8d8d 0,#8d8d8d 1px,transparent 1px,transparent 3px)"></div>
<div class="abs" style="left:41px;top:43.500px;width:10px;height:4.500px;background:repeating-linear-gradient(180deg,#8b74b0 0,#8b74b0 1px,transparent 1px,transparent 3px)"></div>
<div class="abs" style="left:63px;top:42.500px;width:16px;height:7px;opacity:.6;background:repeating-linear-gradient(180deg,#e7d2ff 0,#e7d2ff 1px,transparent 1px,transparent 3px)"></div>
<div class="abs" style="left:90px;top:42.500px;width:14px;height:7px;opacity:.6;background:repeating-linear-gradient(180deg,#e7d2ff 0,#e7d2ff 1px,transparent 1px,transparent 3px)"></div>
<div class="abs" style="left:115px;top:42.500px;width:15px;height:7px;opacity:.55;background:repeating-linear-gradient(180deg,#d9c1f5 0,#d9c1f5 1px,transparent 1px,transparent 3px)"></div>
<div class="n" style="left:10px">4</div></div>
<!-- 5 -->
<div class="th" style="left:668.500px;background:linear-gradient(90deg,#000 0,#000 71.500px,#a64dff 71.500px,#a64dff 100%)">
<div class="abs" style="left:56.500px;top:6.500px;width:29px;height:7px;border-radius:3.500px;background:#a855f7;border:1px solid #c9a0ff"></div>
<div class="abs" style="left:22px;top:9.500px;width:28px;color:#fff;font-size:10.600px;line-height:11px;text-align:center;letter-spacing:-.2px">Learn</div>
<div class="abs" style="left:94px;top:9.500px;width:26px;color:#e6d2ff;font-size:10.600px;line-height:11px;text-align:center;letter-spacing:-.2px">Play</div>
<div class="abs" style="left:17.500px;top:25.500px;width:36.500px;height:35.500px;border-radius:3px;border:1px solid #5a2fa0;background:#08030f"></div>
<svg class="abs" style="left:0;top:0" width="143" height="80" viewBox="0 0 143 80"><path d="M24.500 43.500c4-7.500 18.500-7.500 23 0c-4.500 7.500-19 7.500-23 0z" fill="#e2c8ff"/><circle cx="36" cy="43.500" r="4.600" fill="#a64dff"/><rect x="88.500" y="25.500" width="36" height="35.500" rx="3.500" fill="#dfc6ff" stroke="#5b21b6" stroke-width="1"/><circle cx="90.500" cy="40.500" r="6.500" fill="#9a55f0"/><path d="M98.500 41v11M93 46.500h11M96.500 43l2-2 2 2M96.500 50l2 2 2-2M95 44.500l-2 2 2 2M102 44.500l2 2-2 2" stroke="#111" stroke-width="1.300" fill="none"/><rect x="21" y="70" width="34" height="1.200" fill="#5c5c5c"/><rect x="87" y="70" width="38" height="1.200" fill="#4a1f8a"/></svg>
<div class="n" style="left:10px">5</div></div>
<!-- 6 -->
<div class="th" style="left:830.500px;background:#dab4ff">
<div class="abs" style="left:0;top:0;width:143px;height:80px;background:linear-gradient(90deg,rgba(255,255,255,0) 20%,rgba(255,255,255,.22) 40%,rgba(255,255,255,0) 60%)"></div>
<div class="abs" style="left:0;top:0;width:143px;height:80px;background:radial-gradient(ellipse 70px 42px at 0% 100%,rgba(40,10,70,.95),rgba(60,20,100,.45) 50%,rgba(120,70,180,0) 100%)"></div>
<div class="abs" style="left:18px;top:11.500px;width:107.500px;height:58px;border-radius:2.500px;background:#030105"></div>
<div class="abs" style="left:27px;top:31px;color:#fff;font-size:10.800px;line-height:10px;letter-spacing:-.35px">The<br>homepage</div>
<div class="abs" style="left:82px;top:7px;width:38px;text-align:center;color:#a64dff;font-size:60px;line-height:66px;font-weight:bold;transform:scaleX(.92)">1</div>
<div class="abs" style="left:86px;top:56px;width:30px;height:6px;background:#a64dff"></div><div class="n" style="left:10px">6</div></div>
<!-- 7 -->
<div class="th" style="left:992.500px;background:linear-gradient(90deg,#000 0,#000 101px,#dcb8ff 101px,#dcb8ff 100%)">
<div class="abs" style="left:29.500px;top:7px;width:44.500px;height:8.500px;border-radius:4.500px;border:1px solid #6a3fc8"></div>
<div class="abs" style="left:35px;top:10.500px;width:34px;height:1.800px;background:#d0d0d0;opacity:.6"></div>
<div class="abs" style="left:10px;top:21.500px;width:84.500px;height:49.500px;background:#f6f6f8;border:1px solid #5b3aa8"></div>
<div class="abs" style="left:28px;top:29px;width:62px;height:16px;border-radius:1.500px;background:linear-gradient(90deg,#19b5d3,#4a7fe0 55%,#8040e8)"></div>
<div class="abs" style="left:41px;top:35px;width:37px;height:2px;background:#f4f8ff"></div>
<div class="abs" style="left:33px;top:40.500px;width:50px;height:2px;background:repeating-linear-gradient(90deg,#e8f0ff 0,#e8f0ff 2px,transparent 2px,transparent 7px)"></div>
<div class="abs" style="left:30px;top:55px;width:10px;height:6px;background:#4a4038"></div><div class="abs" style="left:44px;top:55px;width:10px;height:6px;background:#d4b13c"></div><div class="abs" style="left:58.500px;top:55px;width:9px;height:6px;background:#58b8c0"></div><div class="abs" style="left:73px;top:55px;width:8px;height:6px;background:#d8506a"></div>
<div class="abs" style="left:0;top:36px;width:101px;height:44px;background:radial-gradient(ellipse at 0% 100%,rgba(0,0,0,1) 0,rgba(0,0,0,.95) 25%,rgba(0,0,0,0) 62%)"></div>
<svg class="abs" style="left:0;top:0" width="143" height="80" viewBox="0 0 143 80"><g fill="#a64dff"><circle cx="121.500" cy="16.500" r="3.500"/><circle cx="121.500" cy="36.500" r="3.500"/><circle cx="121.500" cy="56.500" r="3.500"/><circle cx="85" cy="22" r="2.500"/><circle cx="8.500" cy="42" r="2.500"/><circle cx="44.500" cy="50" r="2.500"/><circle cx="92" cy="67.500" r="2"/></g><g fill="#6c4a9a" opacity=".55"><rect x="113.500" y="23" width="16" height="1.100"/><rect x="112" y="26" width="19" height="1.100"/><rect x="115" y="43" width="13" height="1.100"/><rect x="113.500" y="46" width="16" height="1.100"/><rect x="113.500" y="63" width="16" height="1.100"/><rect x="112.500" y="66" width="18" height="1.100"/></g></svg>
<div class="n" style="left:10px">7</div></div>
<!-- 8 -->
<div class="th" style="left:1155px;background:#f9cad3">
<div class="abs" style="left:0;top:0;width:143px;height:80px;background:linear-gradient(90deg,rgba(255,255,255,0) 55%,rgba(255,255,255,.3) 75%,rgba(255,255,255,0) 95%)"></div>
<div class="abs" style="left:0;top:0;width:143px;height:80px;background:radial-gradient(ellipse 70px 42px at 0% 100%,rgba(50,20,25,.9),rgba(90,50,55,.45) 50%,rgba(160,110,115,0) 100%)"></div>
<div class="abs" style="left:18px;top:11px;width:107px;height:58.500px;border-radius:2.500px;background:#030203"></div>
<div class="abs" style="left:27px;top:29px;color:#f4f0f0;font-size:12.300px;line-height:11.800px;letter-spacing:-.35px">Edit<br>a design</div>
<div class="abs" style="left:80px;top:6.500px;width:40px;text-align:center;color:#ff7b6c;font-size:60px;line-height:66px;font-weight:bold;transform:scaleX(.95)">2</div>
<div class="n" style="left:10px">8</div></div>
<!-- 9 -->
<div class="th" style="left:1317.500px;background:#000">
<div class="abs" style="left:26px;top:5.500px;width:20px;height:7px;border-radius:3.500px;border:1px solid #b4584c"></div>
<div class="abs" style="left:14px;top:17px;width:44px;height:1.200px;background:#777"></div>
<div class="abs" style="left:9px;top:21.500px;width:60px;height:50px;background:linear-gradient(180deg,#6a3ad8 0,#6a3ad8 4px,#f4f2f5 4px,#f4f2f5 100%);border:1px solid #4a2a98"></div>
<div class="abs" style="left:20px;top:33px;width:29px;height:29px;background:linear-gradient(170deg,#b9a690,#d8c5b0 45%,#c08a60 75%,#e8dccd)"></div>
<div class="abs" style="left:0;top:40px;width:62px;height:40px;background:radial-gradient(ellipse at 0% 100%,rgba(0,0,0,1) 0,rgba(0,0,0,.9) 30%,rgba(0,0,0,0) 68%)"></div>
<div class="n" style="left:10px">9</div></div>
</div>
<!-- strip scrollbar -->
<div class="abs" style="left:540px;top:900.500px;width:1380px;height:19px;background:#f1f1f1"></div>
<div class="abs" style="left:561px;top:901.500px;width:379px;height:16.500px;background:#c1c1c1"></div>
<svg class="abs" style="left:540px;top:900px" width="1380" height="20" viewBox="540 900 1380 20"><path d="M553.500 905l-5 4.800 5 4.800z" fill="#a3a3a3"/><path d="M1906.500 904.500l5.200 5-5.200 5z" fill="#505050"/></svg>

<!-- FOOT -->
<div id="foot">
<svg class="abs" style="left:0;top:0" width="1380" height="50" viewBox="540 920 1380 50" fill="none" stroke="#0e1318" stroke-width="1.800" stroke-linecap="round" stroke-linejoin="round">
<!-- notes -->
<path d="M560.500 939.500h16.500M560.500 945h10.500M560.500 950.500h5.500"/>
<path d="M569.500 953.200l.9-3.700 8.300-8.300a1.900 1.900 0 0 1 2.700 0l.2.200a1.900 1.900 0 0 1 0 2.700l-8.300 8.300z" stroke-width="1.600"/>
<!-- duration -->
<rect x="669.600" y="937.300" width="22.400" height="15.200" rx="2.200"/>
<path d="M678.300 941.800v6.200l5.200-3.100z" fill="#0e1318" stroke="none"/>
<!-- timer -->
<circle cx="815.500" cy="946.800" r="8.300"/>
<path d="M812 935.200h7M815.500 942.500v4.500l3 2.800"/>
<!-- vdiv -->
<path d="M1398.500 930v30" stroke="#dcdfe4" stroke-width="1"/>
<!-- slider -->
<path d="M1420 944.500h91" stroke="#9a9ea6" stroke-width="2.400"/>
<path d="M1512 944.500h156" stroke="#dfe1e5" stroke-width="2.400"/>
<circle cx="1511.800" cy="944.500" r="8" fill="#0e1318" stroke="none"/>
<!-- grid -->
<rect x="1781" y="936.500" width="7" height="6.500" rx="1.300"/><rect x="1792.500" y="936.500" width="7" height="6.500" rx="1.300"/><rect x="1781" y="947" width="7" height="6.500" rx="1.300"/><rect x="1792.500" y="947" width="7" height="6.500" rx="1.300"/>
<!-- expand -->
<path d="M1842.500 936.500h6.500v6.500M1849 936.500l-6.500 6.500M1837.500 953.500h-6.500v-6.500M1831 953.500l6.500-6.500"/>
<!-- help -->
<circle cx="1889" cy="944.800" r="10.700"/>
<path d="M1885.800 941.800a3.300 3.300 0 1 1 4.800 2.900c-1 .6-1.500 1.200-1.500 2.300v.5"/>
<circle cx="1889.100" cy="950.800" r="1.200" fill="#0e1318" stroke="none"/>
</svg>
<div class="t" style="left:51px;letter-spacing:.7px">Notes</div>
<div class="t" style="left:161.700px;letter-spacing:.98px">Duration</div>
<div class="t" style="left:296.600px;letter-spacing:.8px">Timer</div>
<div class="t" style="left:747px">Page 2 / 29</div>
<div class="t" style="left:1162px">43%</div>
</div>
</body>
</html>
